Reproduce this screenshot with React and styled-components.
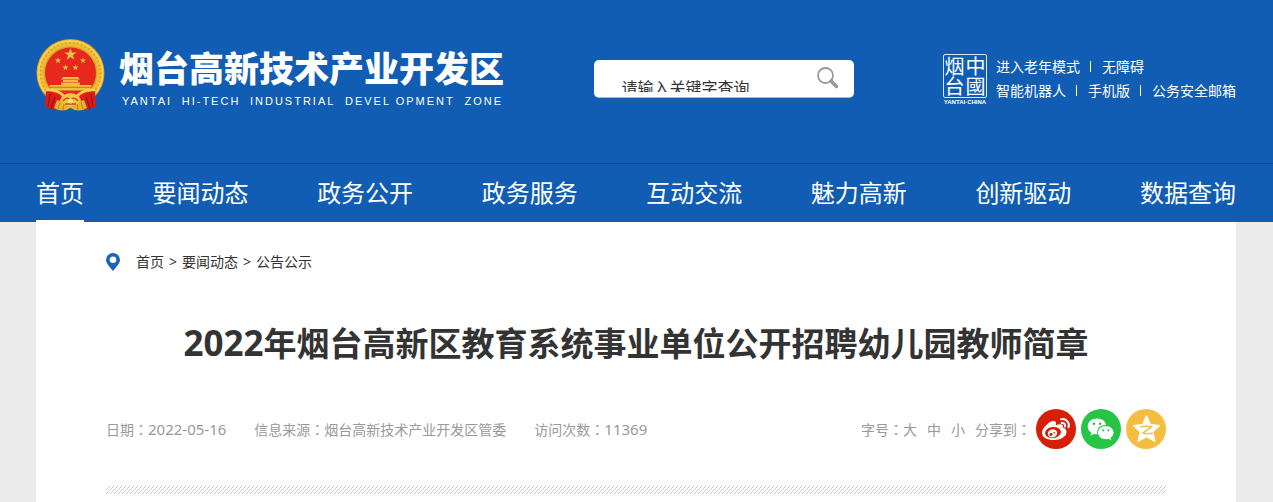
import React from 'react'
import styled, { createGlobalStyle } from 'styled-components'

const sans = '"Noto Sans", "Noto Sans CJK SC", sans-serif'

// centred 1200px column that always starts on a whole pixel
const columnMargin = '0 auto 0 max(0px, round(down, 50vw - 600px, 1px))'

const GlobalStyle = createGlobalStyle`
  * {
    box-sizing: border-box;
    margin: 0;
    padding: 0;
  }

  body {
    font-family: ${sans};
    font-size: 14px;
    background: #ebebeb;
  }

  a {
    color: inherit;
    text-decoration: none;
  }
`

const navItems = ['首页', '要闻动态', '政务公开', '政务服务', '互动交流', '魅力高新', '创新驱动', '数据查询']

const star = (cx, cy, r) =>
  Array.from({ length: 10 }, (_, i) => {
    const a = (Math.PI / 5) * i - Math.PI / 2
    const d = i % 2 ? r * 0.4 : r
    return `${(cx + d * Math.cos(a)).toFixed(2)},${(cy + d * Math.sin(a)).toFixed(2)}`
  }).join(' ')

const Emblem = () => (
  <svg width="70" height="74" viewBox="0 0 70 74" aria-hidden="true">
    <circle cx="34.5" cy="34" r="34" fill="#dfa325" />
    <circle cx="34.5" cy="34" r="31.5" fill="none" stroke="#f8d251" strokeWidth="3" />
    <circle cx="34.5" cy="34" r="29" fill="none" stroke="#f0bd3a" strokeWidth="4" />
    <circle cx="34.5" cy="34" r="30" fill="none" stroke="#d4951f" strokeWidth="2" strokeDasharray="1 3" />
    <circle cx="34.5" cy="34" r="25.5" fill="#e6281d" />
    <g fill="#efbd42">
      <polygon points={star(34.5, 15.5, 6.5)} />
      <polygon points={star(22, 21.5, 3.3)} />
      <polygon points={star(47, 21.5, 3.3)} />
      <polygon points={star(29.5, 28.5, 3.3)} />
      <polygon points={star(39.5, 28.5, 3.3)} />
      <path d="M27 38h15l2 2.500h-19zM27 41h15v2h-15zM25 43.500h19v2.500h-19zM14 46h41l1 2h-43zM14 48.500h41l-2 3h-37z" />
    </g>
    <path d="M26 46v-2M43 46v-2M13 48h43" stroke="#d6921f" strokeWidth=".6" />
    <path d="M10 51Q20 53 27 59L22 64L20 71L9 68Z" fill="#da1d17" />
    <path d="M59 51Q49 53 42 59L47 64L49 71L60 68Z" fill="#da1d17" />
    <path d="M14 55l-2 13M19 58l-4 12M55 55l2 13M50 58l4 12" stroke="#a3100d" strokeWidth="1.200" />
    <path d="M21 61Q34.5 66 48 61L51 69Q43 74 34.5 69Q26 74 18 69Z" fill="#e8b331" />
    <path d="M24 63l-2 7M28 65l-1 6M45 63l2 7M41 65l1 6" stroke="#bf8118" strokeWidth="1" />
    <path d="M10 51Q21 50 28 57M59 51Q48 50 41 57" fill="none" stroke="#f6cf52" strokeWidth="2.500" />
    <path d="M24 61Q26 55 34.5 54Q43 55 45 61L41 65L34.5 68L28 65Z" fill="#f3c543" />
    <path d="M27 62Q31 57 34.5 61Q38 57 42 62M29 65h11" fill="none" stroke="#cc4b19" strokeWidth="1.500" />
    <circle cx="34.5" cy="62" r="2.500" fill="#fbe07a" />
  </svg>
)

const SearchIcon = () => (
  <svg width="24" height="24" viewBox="0 0 24 24" fill="none" stroke="#999" aria-hidden="true">
    <circle cx="9.5" cy="9.5" r="7.5" strokeWidth="1.800" />
    <path d="M15 15L20.500 20.500" strokeWidth="3.500" strokeLinecap="round" />
  </svg>
)

const PinIcon = () => (
  <svg width="14" height="18" viewBox="0 0 14 18" aria-hidden="true">
    <path fillRule="evenodd" fill="#1c64b8" d="M7 0a7 7 0 0 1 7 7c0 3-3.500 7-7 11C3.500 14 0 10 0 7a7 7 0 0 1 7-7zm0 3.500a3.300 3.300 0 1 0 0 6.600 3.300 3.300 0 0 0 0-6.600z" />
  </svg>
)

const WeiboIcon = () => (
  <svg width="40" height="40" viewBox="0 0 40 40" aria-hidden="true">
    <path fill="#fff" d="M6 24c0-5 7-12 11.500-12 2.500 0 3 2 2.300 4.200 4-1.700 8-1.500 7 2.300 2 .6 3.700 2 3.700 4.500 0 4.500-6 8-12.500 8S6 28.500 6 24z" />
    <ellipse cx="17" cy="23.5" rx="8" ry="5.5" fill="#d81e06" transform="rotate(-7 17 23.5)" />
    <ellipse cx="16.5" cy="24.3" rx="4.7" ry="4" fill="#fff" transform="rotate(-15 16.5 24.3)" />
    <circle cx="15" cy="25.300" r="1.600" fill="#d81e06" />
    <circle cx="18.200" cy="23.600" r=".8" fill="#d81e06" />
    <path fill="none" stroke="#fff" strokeWidth="2" strokeLinecap="round" d="M25 10.200c5-1 9 3.300 7.600 8M25.600 14c2.400-.5 4 1.300 3.400 3.500" />
  </svg>
)

const WechatIcon = () => (
  <svg width="40" height="40" viewBox="0 0 40 40" aria-hidden="true">
    <path fill="#fff" d="M16 9.500c-5.200 0-9.300 3.500-9.300 8 0 2.600 1.300 4.700 3.600 6.300l-.8 2.800 3.300-1.700c1.200.3 2.200.4 3.600.4a7 7 0 0 1-.3-2c0-4 3.600-7.200 8.200-7.200h.6C24.800 12.300 20.800 9.500 16 9.500z" />
    <path fill="#fff" d="M32.600 23.500c0-3.700-3.600-6.600-7.800-6.600-4.400 0-7.800 2.900-7.800 6.600s3.400 6.700 7.800 6.700c.9 0 1.900-.2 2.700-.4l2.700 1.400-.7-2.400c1.900-1.300 3.100-3.200 3.100-5.300z" />
    <g fill="#28c445">
      <circle cx="12.900" cy="14.700" r="1.300" />
      <circle cx="19.200" cy="14.700" r="1.300" />
      <circle cx="22.300" cy="21.300" r="1.100" />
      <circle cx="27.300" cy="21.300" r="1.100" />
    </g>
  </svg>
)

const QzoneIcon = () => (
  <svg width="40" height="40" viewBox="0 0 40 40" aria-hidden="true">
    <path fill="#fff" stroke="#fff" strokeWidth="1" strokeLinejoin="round" d="M20.500 6.500l4 9 9.500 1-7 6.500 2 9.500-8.500-4.500-8.500 4.500 2-9.500-7-6.500 9.500-1z" />
    <path fill="none" stroke="#f6be41" strokeWidth="1.400" d="M14.500 17.800c4-.7 7.500-.6 11 0l-8.500 6.200c3 .8 6 .9 10 .2" />
  </svg>
)

export default function App() {
  return (
    <Page>
      <GlobalStyle />
      <Header>
        <Banner>
          <Brand href="#">
            <Emblem />
            <BrandText>
              <BrandName>烟台高新技术产业开发区</BrandName>
              <BrandSub>
                <span>YANTAI</span>
                <span>HI-TECH</span>
                <span>INDUSTRIAL</span>
                <span>DEVEL OPMENT</span>
                <span>ZONE</span>
              </BrandSub>
            </BrandText>
          </Brand>
          <SearchForm onSubmit={(e) => e.preventDefault()}>
            <SearchInput type="text" aria-label="请输入关键字查询" defaultValue="请输入关键字查询" />
            <SearchButton type="submit" aria-label="查询">
              <SearchIcon />
            </SearchButton>
          </SearchForm>
          <Tools>
            <Seal>
              <SealFace>中國烟台</SealFace>
              <SealCaption>YANTAI·CHINA</SealCaption>
            </Seal>
            <ToolRows>
              <ToolRow>
                <a href="#">进入老年模式</a>
                <a href="#">无障碍</a>
              </ToolRow>
              <ToolRow>
                <a href="#">智能机器人</a>
                <a href="#">手机版</a>
                <a href="#">公务安全邮箱</a>
              </ToolRow>
            </ToolRows>
          </Tools>
        </Banner>
        <NavBar>
          <NavList>
            {navItems.map((item, i) => (
              <NavLink key={item} href="#" $active={i === 0}>{item}</NavLink>
            ))}
          </NavList>
        </NavBar>
      </Header>
      <Article>
        <Crumbs>
          <PinIcon />
          <CrumbList>
            <a href="#">首页</a>
            <span>&gt;</span>
            <a href="#">要闻动态</a>
            <span>&gt;</span>
            <a href="#">公告公示</a>
          </CrumbList>
        </Crumbs>
        <Title><TitleYear>2022</TitleYear>年烟台高新区教育系统事业单位公开招聘幼儿园教师简章</Title>
        <Meta>
          <MetaGroup $gap="28px">
            <span>日期<Colon>：</Colon><Num>2022-05-16</Num></span>
            <span>信息来源<Colon>：</Colon>烟台高新技术产业开发区管委</span>
            <span>访问次数<Colon>：</Colon><Num>11369</Num></span>
          </MetaGroup>
          <MetaGroup $gap="5px">
            <MetaGroup $gap="10px">
              <span>字号<Colon>：</Colon><SizeButton type="button">大</SizeButton></span>
              <SizeButton type="button">中</SizeButton>
              <SizeButton type="button">小</SizeButton>
              <span>分享到<Colon>：</Colon></span>
            </MetaGroup>
            <ShareLink href="#" aria-label="微博" $color="#d81e06"><WeiboIcon /></ShareLink>
            <ShareLink href="#" aria-label="微信" $color="#28c445"><WechatIcon /></ShareLink>
            <ShareLink href="#" aria-label="QQ空间" $color="#f6be41"><QzoneIcon /></ShareLink>
          </MetaGroup>
        </Meta>
        <Hatch />
      </Article>
    </Page>
  )
}

const Page = styled.div`
  display: flex;
  flex-direction: column;
  min-height: 100vh;
`

const Header = styled.header`
  background: #115db3;
  color: #fff;
`

const Banner = styled.div`
  display: flex;
  justify-content: space-between;
  max-width: 1200px;
  height: 163px;
  margin: ${columnMargin};
  padding-top: 39px;
`

const Brand = styled.a`
  display: flex;
  align-items: flex-start;
  gap: 13px;
`

const BrandText = styled.div`
  padding-top: 8px;
`

const BrandName = styled.h2`
  font-size: 35px;
  font-weight: 900;
  line-height: 44px;
`

const BrandSub = styled.p`
  display: flex;
  justify-content: space-between;
  padding: 0 1px 0 3px;
  font-family: "Liberation Sans", sans-serif;
  font-size: 11px;
  line-height: 20px;
  letter-spacing: 2px;
`

const SearchForm = styled.form`
  display: flex;
  align-items: flex-start;
  width: 260px;
  height: 38px;
  margin-top: 21px;
  padding-left: 28px;
  background: #fff;
  border-bottom: 1px solid #a9b8c8;
  border-radius: 5px;
`

const SearchInput = styled.input`
  flex: 1;
  min-width: 0;
  height: 32px;
  padding-top: 22px;
  border: 0;
  outline: 0;
  background: transparent;
  color: #333;
  font-family: ${sans};
  font-size: 16px;
`

const SearchButton = styled.button`
  width: 52px;
  height: 38px;
  border: 0;
  background: transparent;
  cursor: pointer;
`

const Tools = styled.div`
  display: flex;
  gap: 9px;
  padding-top: 15px;
`

const Seal = styled.div`
  width: 44px;
`

const SealFace = styled.div`
  width: 44px;
  height: 44px;
  border: 1px solid #dce8f6;
  border-radius: 2px;
  padding: 1px 0;
  font-family: "Noto Sans CJK TC", sans-serif;
  font-size: 20px;
  line-height: 21px;
  writing-mode: vertical-rl;
`

const SealCaption = styled.p`
  font-family: "Liberation Sans", sans-serif;
  font-size: 6px;
  font-weight: 700;
  line-height: 8px;
  text-align: center;
  white-space: nowrap;
`

const ToolRows = styled.div`
  padding-top: 1px;
`

const ToolRow = styled.p`
  display: flex;
  line-height: 24px;

  a + a::before {
    content: '';
    display: inline-block;
    width: 1px;
    height: 11px;
    margin: 0 11px 0 10px;
    background: #fff;
  }
`

const NavBar = styled.nav`
  border-top: 1px solid #0b4a91;
`

const NavList = styled.div`
  display: flex;
  justify-content: space-between;
  max-width: 1200px;
  margin: ${columnMargin};
`

const NavLink = styled.a`
  height: 58px;
  border-bottom: 2px solid ${({ $active }) => ($active ? '#fff' : 'transparent')};
  font-size: 24px;
  line-height: 58px;
`

const Article = styled.main`
  flex: 1;
  width: 100%;
  max-width: 1200px;
  margin: ${columnMargin};
  padding: 28px 70px 0;
  background: #fff;
`

const Crumbs = styled.nav`
  display: flex;
  align-items: center;
  gap: 16px;
  color: #333;
  line-height: 24px;
`

const CrumbList = styled.div`
  display: flex;
  gap: 5px;
`

const Title = styled.h1`
  margin-top: 45px;
  color: #333;
  font-size: 33px;
  line-height: 50px;
  text-align: center;
`

const TitleYear = styled.span`
  font-size: 35px;
  line-height: 1;
`

const Meta = styled.div`
  display: flex;
  justify-content: space-between;
  align-items: center;
  margin-top: 40px;
  color: #999;
`

const MetaGroup = styled.div`
  display: flex;
  align-items: center;
  gap: ${({ $gap }) => $gap};
`

const Colon = styled.span`
  font-family: "Noto Sans CJK TC", sans-serif;
`

const Num = styled.span`
  font-size: 15px;
  line-height: 1;
`

const SizeButton = styled.button`
  border: 0;
  background: transparent;
  color: inherit;
  font: inherit;
  cursor: pointer;
`

const ShareLink = styled.a`
  display: block;
  width: 40px;
  height: 40px;
  border-radius: 50%;
  background: ${({ $color }) => $color};
`

const Hatch = styled.div`
  height: 8px;
  margin-top: 37px;
  background: linear-gradient(135deg, transparent 45%, #ccc 45% 55%, transparent 55%) 0 0 / 4px 4px;
`
